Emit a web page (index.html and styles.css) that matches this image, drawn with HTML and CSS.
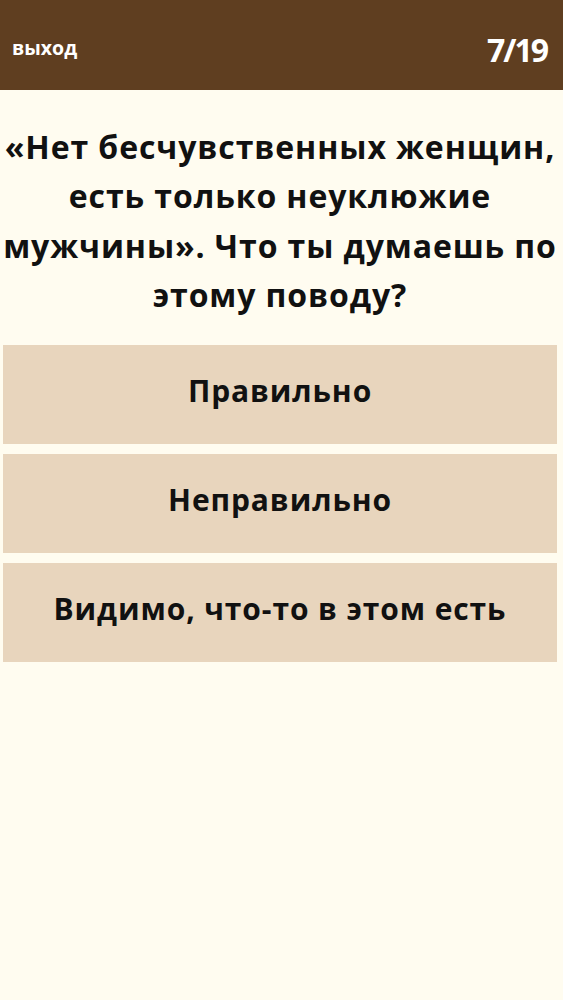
FILE: index.html
```html
<!DOCTYPE html>
<html lang="ru">
<head>
<meta charset="utf-8">
<link rel="stylesheet" href="styles.css">
</head>
<body>
<header class="topbar">
  <span class="exit">выход</span>
  <span class="counter">7/19</span>
</header>
<main class="quiz">
  <h1 class="question">«Нет бесчувственных женщин,<br>есть только неуклюжие<br>мужчины». Что ты думаешь по<br>этому поводу?</h1>
  <div class="answers">
    <div class="answer">Правильно</div>
    <div class="answer">Неправильно</div>
    <div class="answer">Видимо, что-то в этом есть</div>
  </div>
</main>
</body>
</html>
```
FILE: styles.css
```css
html, body {
  margin: 0;
  padding: 0;
}
body {
  background: #fffcf0;
  font-family: "Open Sans", "Noto Sans", sans-serif;
  color: #111;
  width: 563px;
  min-height: 1000px;
}
.topbar {
  height: 90px;
  background: #5f3e20;
  display: flex;
  align-items: center;
  justify-content: space-between;
  padding: 0 16px 0 12px;
  box-sizing: border-box;
  color: #fff;
}
.exit {
  font-size: 19.5px;
  font-weight: 700;
  margin-top: 5px;
}
.counter {
  font-size: 32px;
  font-weight: 700;
  letter-spacing: -2px;
  margin-top: 9px;
}
.quiz {
  padding: 0 6px 0 3px;
}
.question {
  margin: 0 0 26px;
  padding: 32px 0 0;
  text-align: center;
  font-size: 32px;
  line-height: 49.3px;
  font-weight: 700;
  letter-spacing: 0.9px;
  white-space: nowrap;
}
.answers {
  display: flex;
  flex-direction: column;
  gap: 10px;
}
.answer {
  height: 99px;
  box-sizing: border-box;
  padding-bottom: 8px;
  background: #e8d5bd;
  display: flex;
  align-items: center;
  justify-content: center;
  font-size: 30px;
  font-weight: 700;
  letter-spacing: 0.9px;
}
```
